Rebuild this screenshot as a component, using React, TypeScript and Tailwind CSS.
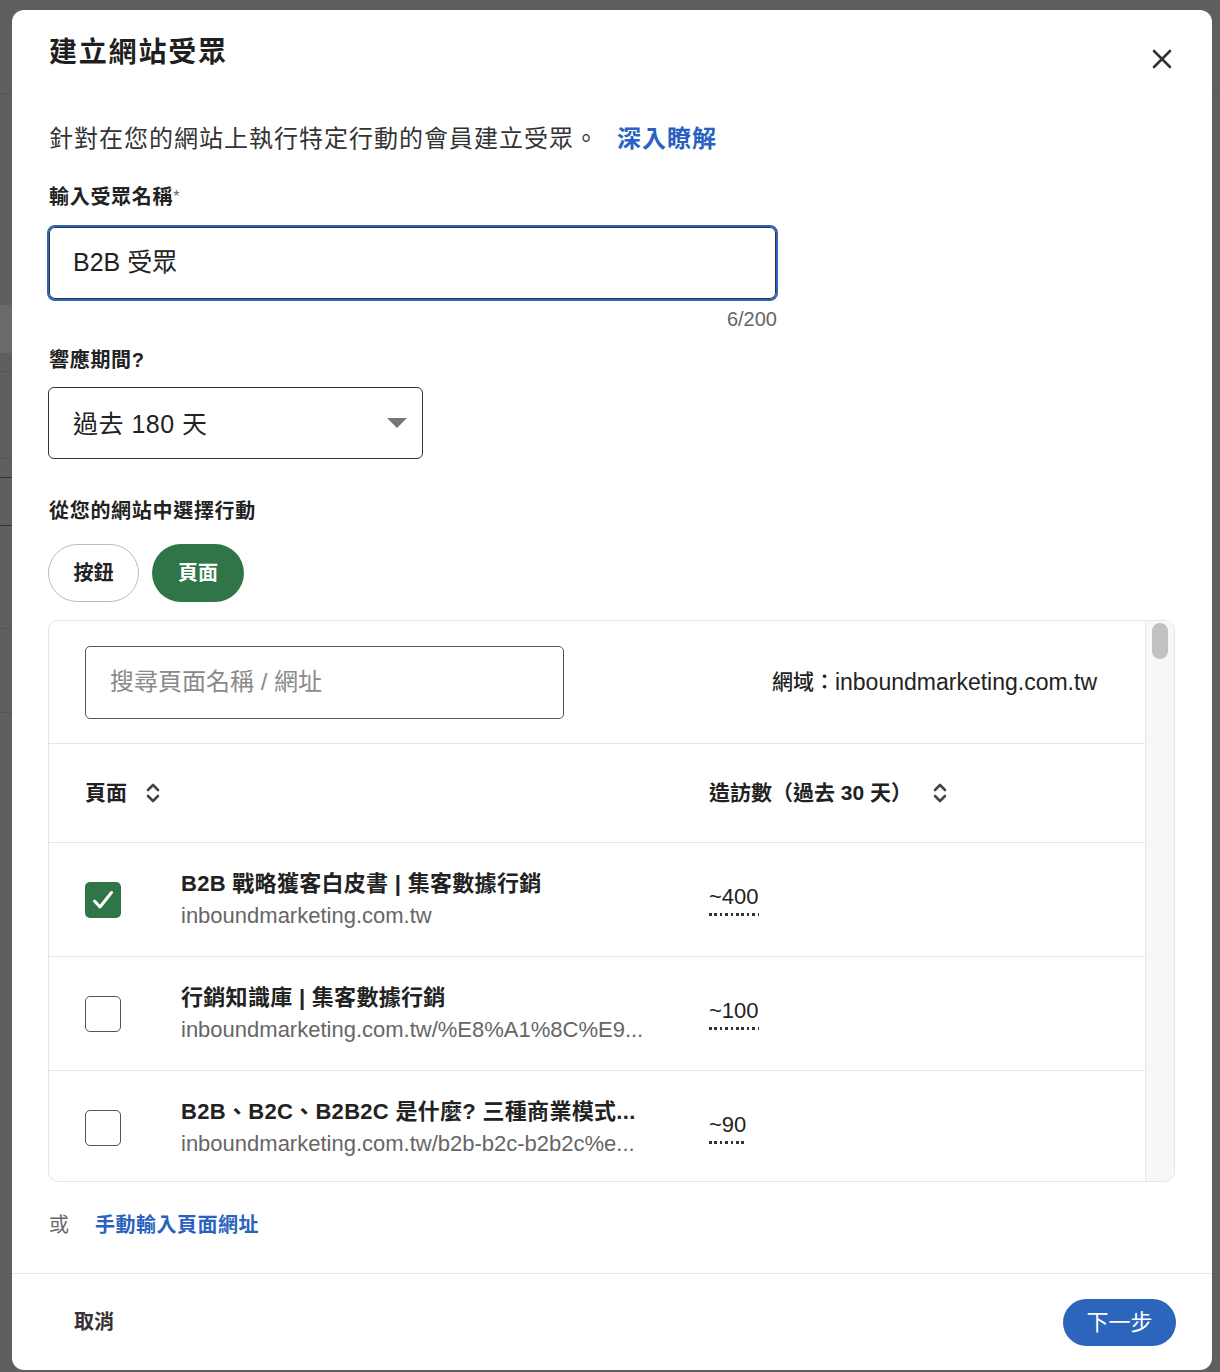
import React from "react";

const FONT = '"Liberation Sans", "Noto Sans CJK TC", sans-serif';

function SortIcon() {
  return (
    <svg width="16" height="24" viewBox="0 0 16 24" fill="none">
      <polyline points="3,9 8,4 13,9" stroke="#444" strokeWidth="2.6" strokeLinecap="round" strokeLinejoin="round" />
      <polyline points="3,15 8,20 13,15" stroke="#444" strokeWidth="2.6" strokeLinecap="round" strokeLinejoin="round" />
    </svg>
  );
}

function Checkbox({ checked }: { checked?: boolean }) {
  if (checked) {
    return (
      <div className="w-[36px] h-[36px] rounded-[5px] bg-[#2f7548] flex items-center justify-center shrink-0">
        <svg width="36" height="36" viewBox="0 0 36 36" fill="none">
          <polyline points="9.5,19 15,25 26.5,10.5" stroke="#fff" strokeWidth="3" strokeLinecap="round" strokeLinejoin="round" />
        </svg>
      </div>
    );
  }
  return <div className="w-[36px] h-[36px] rounded-[5px] border-[1.5px] border-[#555] bg-white shrink-0" />;
}

function Row({ checked, title, url, visits }: { checked?: boolean; title: string; url: string; visits: string }) {
  return (
    <div className="h-[114px] shrink-0 border-b border-[#e6e6e6] flex items-center pl-[36px]">
      <div className="w-[624px] flex items-center shrink-0">
        <Checkbox checked={checked} />
        <div className="ml-[60px] w-[500px] overflow-hidden">
          <div className="text-[22px] leading-[32px] font-bold text-[#222] whitespace-nowrap tracking-[0.3px]">{title}</div>
          <div className="text-[22px] leading-[32px] text-[#666] whitespace-nowrap">{url}</div>
        </div>
      </div>
      <div className="flex flex-col items-start mt-[2px]">
        <span className="text-[22px] leading-[24px] text-[#222]">{visits}</span>
        <div className="mt-[4px] self-stretch h-[3px] bg-[repeating-linear-gradient(to_right,#333_0px,#333_2.5px,transparent_2.5px,transparent_5.4px)]" />
      </div>
    </div>
  );
}

export default function App() {
  return (
    <div className="relative w-[1220px] h-[1372px] bg-[#5f5f5f] overflow-hidden" style={{ fontFamily: FONT }}>
      {/* backdrop hints */}
      <div className="absolute left-0 right-0 top-[93px] h-px bg-[#555]" />
      <div className="absolute left-0 w-[12px] top-[305px] h-[48px] bg-[#6a6a6a]" />
      <div className="absolute left-0 w-[12px] top-[371px] h-px bg-[#555]" />
      <div className="absolute left-0 w-[12px] top-[458px] h-px bg-[#555]" />
      <div className="absolute left-0 w-[12px] top-[477px] h-px bg-[#333]" />
      <div className="absolute left-0 w-[12px] top-[525px] h-px bg-[#333]" />
      <div className="absolute left-0 w-[12px] top-[628px] h-px bg-[#555]" />
      <div className="absolute left-0 w-[12px] top-[712px] h-px bg-[#555]" />

      <div className="absolute left-[12px] top-[10px] w-[1200px] h-[1360px] bg-white rounded-[12px] flex flex-col overflow-hidden">
        {/* Header */}
        <div className="flex justify-between items-start pl-[37px] pr-[40px] pt-[25px]">
          <h1 className="text-[28px] leading-[36px] font-bold text-[#1f1f1f] tracking-[1.8px]">建立網站受眾</h1>
          <svg className="mt-[14px]" width="20" height="20" viewBox="0 0 20 20" fill="none">
            <line x1="2" y1="2" x2="18" y2="18" stroke="#333" strokeWidth="2.6" strokeLinecap="round" />
            <line x1="18" y1="2" x2="2" y2="18" stroke="#333" strokeWidth="2.6" strokeLinecap="round" />
          </svg>
        </div>

        <div className="pl-[36px] pr-[36px] flex flex-col">
          <p className="mt-[52px] text-[24px] leading-[32px] text-[#333] tracking-[1px] pl-[1px]">
            針對在您的網站上執行特定行動的會員建立受眾。
            <span className="ml-[18px] font-bold text-[#2962c0]">深入瞭解</span>
          </p>

          <div className="mt-[28px] text-[20px] leading-[28px] font-bold text-[#222] tracking-[0.7px] pl-[1px]">
            輸入受眾名稱<span className="font-normal text-[#666] text-[16px] align-top">*</span>
          </div>

          <div className="mt-[14px] w-[731px] flex flex-col -ml-[1px]">
            <div className="h-[76px] rounded-[8px] border-[2.5px] border-[#2d64bc] shadow-[inset_0_0_0_1px_#333] flex items-center pl-[24px]">
              <span className="text-[25px] text-[#222]">B2B 受眾</span>
            </div>
            <div className="mt-[6px] self-end text-[20px] leading-[24px] text-[#666] pr-[1px]">6/200</div>
          </div>

          <div className="mt-[15px] text-[20px] leading-[28px] font-bold text-[#222] tracking-[0.7px] pl-[1px]">響應期間?</div>

          <div className="mt-[13px] w-[375px] h-[72px] rounded-[6px] border border-[#333] flex items-center justify-between pl-[24px] pr-[15px]">
            <span className="text-[25px] text-[#222] mt-[3px] tracking-[0.5px]">過去 180 天</span>
            <svg width="20" height="10" viewBox="0 0 20 10">
              <polygon points="0,0 20,0 10,10" fill="#777" />
            </svg>
          </div>

          <div className="mt-[38px] text-[20px] leading-[28px] font-bold text-[#222] tracking-[0.7px] pl-[1px]">從您的網站中選擇行動</div>

          <div className="mt-[19px] flex gap-[13px]">
            <div className="w-[91px] h-[58px] rounded-full border border-[#bbb] flex items-center justify-center text-[20px] font-bold text-[#222]">按鈕</div>
            <div className="w-[92px] h-[58px] rounded-full bg-[#2f7548] flex items-center justify-center text-[20px] font-bold text-white">頁面</div>
          </div>

          {/* Table */}
          <div className="mt-[18px] h-[562px] w-[1127px] border border-[#e6e6e6] rounded-[10px] overflow-hidden flex">
            <div className="flex-1 flex flex-col overflow-hidden">
              <div className="h-[123px] shrink-0 border-b border-[#e6e6e6] flex items-center justify-between pl-[36px] pr-[48px]">
                <div className="w-[479px] h-[73px] rounded-[5px] border border-[#555] flex items-center pl-[24px]">
                  <span className="text-[24px] text-[#8a8a8a]">搜尋頁面名稱 / 網址</span>
                </div>
                <div className="text-[23px] text-[#222] flex items-center">
                  <span className="font-medium text-[21px]">網域：</span>inboundmarketing.com.tw
                </div>
              </div>
              <div className="h-[99px] shrink-0 border-b border-[#e6e6e6] flex items-center pl-[36px]">
                <div className="w-[624px] flex items-center gap-[18px] shrink-0">
                  <span className="text-[21px] font-bold text-[#222]">頁面</span>
                  <SortIcon />
                </div>
                <div className="flex items-center gap-[20px]">
                  <span className="text-[21px] font-bold text-[#222]">造訪數（過去 30 天）</span>
                  <SortIcon />
                </div>
              </div>
              <Row checked title="B2B 戰略獲客白皮書 | 集客數據行銷" url="inboundmarketing.com.tw" visits="~400" />
              <Row title="行銷知識庫 | 集客數據行銷" url="inboundmarketing.com.tw/%E8%A1%8C%E9..." visits="~100" />
              <Row title="B2B、B2C、B2B2C 是什麼? 三種商業模式..." url="inboundmarketing.com.tw/b2b-b2c-b2b2c%e..." visits="~90" />
            </div>
            <div className="w-[29px] shrink-0 border-l border-[#e8e8e8] bg-[#f7f7f7] pt-[2px] pl-[6px]">
              <div className="w-[16px] h-[36px] rounded-full bg-[#c1c1c1]" />
            </div>
          </div>

          <div className="mt-[29px] flex items-center text-[20px] leading-[28px] pl-[1px]">
            <span className="text-[#666]">或</span>
            <span className="ml-[26px] font-bold text-[#2962c0] tracking-[0.5px]">手動輸入頁面網址</span>
          </div>
        </div>

        <div className="mt-auto h-[97px] border-t border-[#e6e6e6] flex items-center justify-between pl-[62px] pr-[36px]">
          <span className="text-[20px] font-bold text-[#333]">取消</span>
          <div className="w-[113px] h-[47px] rounded-full bg-[#2d64bc] flex items-center justify-center text-[22px] text-white">下一步</div>
        </div>
      </div>
    </div>
  );
}
